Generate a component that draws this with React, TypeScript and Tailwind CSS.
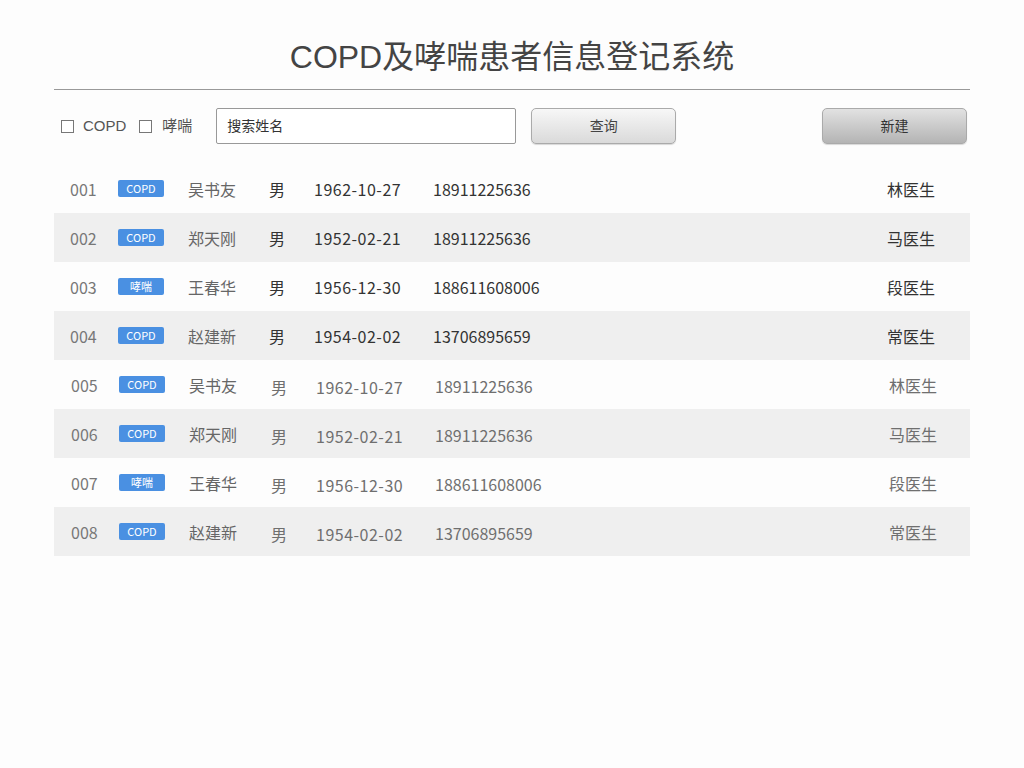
import React from 'react';

type Patient = {
  id: string;
  type: 'COPD' | '哮喘';
  name: string;
  gender: string;
  birth: string;
  phone: string;
  doctor: string;
  light?: boolean;
};

const patients: Patient[] = [
  { id: '001', type: 'COPD', name: '吴书友', gender: '男', birth: '1962-10-27', phone: '18911225636', doctor: '林医生' },
  { id: '002', type: 'COPD', name: '郑天刚', gender: '男', birth: '1952-02-21', phone: '18911225636', doctor: '马医生' },
  { id: '003', type: '哮喘', name: '王春华', gender: '男', birth: '1956-12-30', phone: '188611608006', doctor: '段医生' },
  { id: '004', type: 'COPD', name: '赵建新', gender: '男', birth: '1954-02-02', phone: '13706895659', doctor: '常医生' },
  { id: '005', type: 'COPD', name: '吴书友', gender: '男', birth: '1962-10-27', phone: '18911225636', doctor: '林医生', light: true },
  { id: '006', type: 'COPD', name: '郑天刚', gender: '男', birth: '1952-02-21', phone: '18911225636', doctor: '马医生', light: true },
  { id: '007', type: '哮喘', name: '王春华', gender: '男', birth: '1956-12-30', phone: '188611608006', doctor: '段医生', light: true },
  { id: '008', type: 'COPD', name: '赵建新', gender: '男', birth: '1954-02-02', phone: '13706895659', doctor: '常医生', light: true },
];

const font = { fontFamily: '"Noto Sans CJK SC", "Liberation Sans", sans-serif' };
const latin = { fontFamily: '"Liberation Sans", "Noto Sans CJK SC", sans-serif' };

const PatientRow = ({ p, index }: { p: Patient; index: number }) => {
  const striped = index % 2 === 1;
  const main = p.light ? 'text-[#6f6f6f]' : 'text-[#333]';
  return (
    <div
      className={`flex h-[49px] items-center text-[16px] ${striped ? 'bg-[#efefef]' : ''} ${p.light ? 'pl-[1px]' : ''}`}
    >
      <div className="w-[64px] pl-[16px] text-[#777]">{p.id}</div>
      <div className="w-[70px]">
        <span className="flex h-[17px] w-[46px] items-center justify-center rounded-[2px] bg-[#4a90e2] text-[11px] text-white">
          {p.type}
        </span>
      </div>
      <div className="w-[81px] text-[#666]">{p.name}</div>
      <div className={`w-[45px] ${main} ${p.light ? 'pt-[4px] pl-[1px]' : ''}`}>{p.gender}</div>
      <div className={`w-[119px] tracking-[0.5px] ${main} ${p.light ? 'pt-[4px] pl-[1px]' : ''}`}>{p.birth}</div>
      <div className={`flex-1 ${main} ${p.light ? 'pt-[2px] pl-[1px]' : ''}`}>{p.phone}</div>
      <div className={`w-[83px] ${main} ${p.light ? 'pl-[2px]' : ''}`}>{p.doctor}</div>
    </div>
  );
};

const App = () => {
  return (
    <div className="min-h-[768px] bg-[#fdfdfd] px-[54px] pt-[37px]" style={font}>
      <h1 className="h-[40px] text-center text-[32px] leading-[40px] text-[#444]" style={latin}>
        COPD及哮喘患者信息登记系统
      </h1>
      <div className="mt-[12px] h-px bg-[#999]" />

      <div className="mt-[18px] flex h-[36px] items-center" style={latin}>
        <label className="ml-[7px] flex items-center text-[15px] text-[#555]">
          <span className="h-[13px] w-[13px] border border-[#777] bg-white" />
          <span className="ml-[9px]">COPD</span>
        </label>
        <label className="ml-[13px] flex items-center text-[15px] text-[#555]">
          <span className="h-[13px] w-[13px] border border-[#777] bg-white" />
          <span className="ml-[10px]">哮喘</span>
        </label>
        <input
          className="ml-[24px] h-[36px] w-[300px] rounded-[2px] border border-[#999] bg-white px-[10px] text-[14px] text-[#333] placeholder:text-[#333] outline-none"
          placeholder="搜索姓名"
        />
        <button className="ml-[15px] h-[36px] w-[145px] rounded-[5px] border border-[#aaa] bg-gradient-to-b from-[#f7f7f7] to-[#dadada] text-[14px] text-[#444] shadow-[0_1px_1px_rgba(0,0,0,0.15)]">
          查询
        </button>
        <div className="flex-1" />
        <button className="mr-[3px] h-[36px] w-[145px] rounded-[5px] border border-[#aaa] bg-gradient-to-b from-[#e2e2e2] to-[#b4b4b4] text-[14px] text-[#333] shadow-[0_1px_1px_rgba(0,0,0,0.15)]">
          新建
        </button>
      </div>

      <div className="mt-[20px]">
        {patients.map((p, i) => (
          <PatientRow key={p.id} p={p} index={i} />
        ))}
      </div>
    </div>
  );
};

export default App;
